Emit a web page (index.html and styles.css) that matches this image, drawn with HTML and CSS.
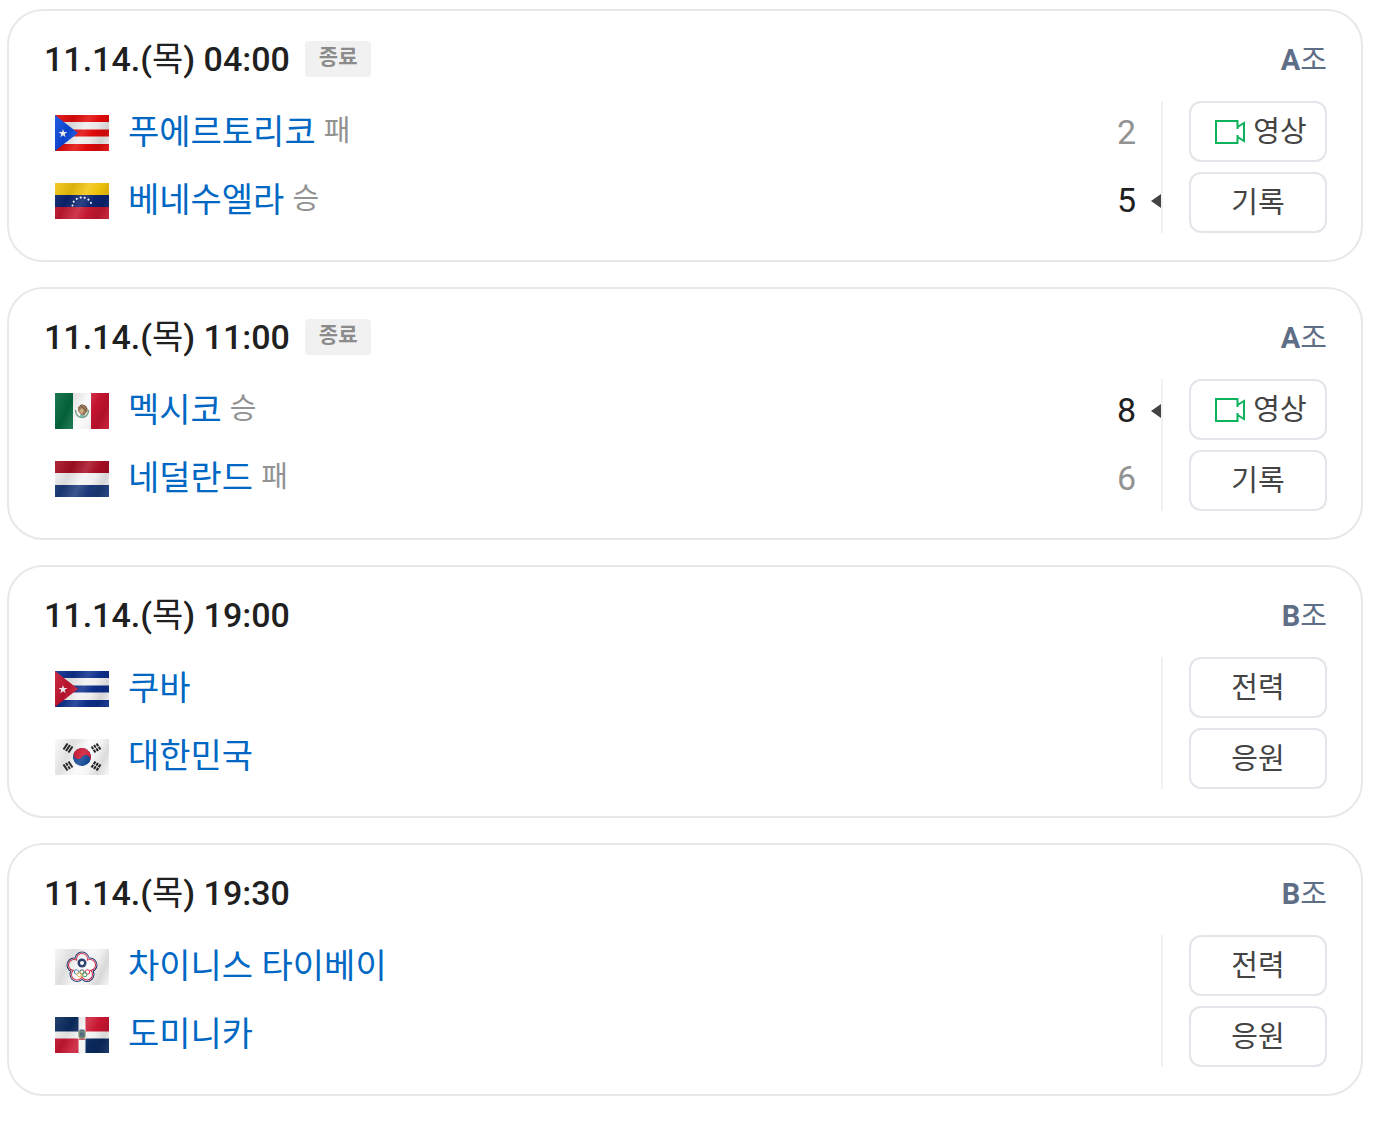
FILE: index.html
```html
<!DOCTYPE html>
<html lang="ko">
<head>
<meta charset="utf-8">
<meta name="viewport" content="width=device-width, initial-scale=1">
<title>11.14.(목)</title>
<link rel="stylesheet" href="styles.css">
</head>
<body>
  <ul class="match-list">
    <li class="match">
      <div class="match-head">
        <strong class="date">11.14.(<span class="ko">목</span>) 04:00</strong>
        <span class="state">종료</span>
        <span class="group">A<span class="ko">조</span></span>
      </div>
      <div class="match-body">
        <div class="teams">
          <div class="team">
            <span class="flag"><svg viewBox="0 0 54 36" aria-hidden="true">
              <path fill="#eee" d="M0 0h54v36H0z"/>
              <path fill="#e30a0a" d="M0 0h54v7H0zM0 14.500h54v7H0zM0 29h54v7H0z"/>
              <path fill="#0b4be0" d="M0 0l23 18L0 36z"/>
              <path fill="#fff" d="M8 14l1 3h3.500l-2.800 2 1 3.200L8 20.300l-2.700 1.900 1-3.200-2.800-2H7z"/>
            </svg></span>
            <a class="name" href="#">푸에르토리코</a>
            <span class="result">패</span>
            <span class="score">2</span>
          </div>
          <div class="team win">
            <span class="flag"><svg viewBox="0 0 54 36" aria-hidden="true">
              <path fill="#f3c50c" d="M0 0h54v12H0z"/>
              <path fill="#0a2472" d="M0 12h54v12H0z"/>
              <path fill="#c61831" d="M0 24h54v12H0z"/>
              <path fill="none" stroke="#fff" stroke-width="2" stroke-linecap="round" stroke-dasharray="0.100 4" d="M17.500 22.500a9.500 8 0 0 1 19 0"/>
            </svg></span>
            <a class="name" href="#">베네수엘라</a>
            <span class="result">승</span>
            <span class="score">5</span>
          </div>
        </div>
        <div class="actions">
          <a class="btn video" href="#"><svg class="ico-video" viewBox="0 0 30 24" aria-hidden="true"><path d="M1 1h21.500v6L29 3v18l-6.500-4v6H1zM22.500 7v2M22.500 17v-2"/></svg>영상</a>
          <a class="btn" href="#">기록</a>
        </div>
      </div>
    </li>

    <li class="match">
      <div class="match-head">
        <strong class="date">11.14.(<span class="ko">목</span>) 11:00</strong>
        <span class="state">종료</span>
        <span class="group">A<span class="ko">조</span></span>
      </div>
      <div class="match-body">
        <div class="teams">
          <div class="team win">
            <span class="flag"><svg viewBox="0 0 54 36" aria-hidden="true">
              <path fill="#fafafa" d="M0 0h54v36H0z"/>
              <path fill="#046a3e" d="M0 0h18v36H0z"/>
              <path fill="#c8142f" d="M36 0h18v36H36z"/>
              <path fill="none" stroke="#6f9a78" stroke-width="1.500" d="M20.500 17c0 10 13 10 13 0"/>
              <path fill="#8d6a48" d="M23 14l4-3 4 2 2 4-2 3-2 3-3-1-3-4z"/>
              <path fill="#c9a06b" d="M24 18l3-3 2 2-2 4z"/>
              <path fill="#67b3ae" d="M25 22h4v2h-4z"/>
              <path stroke="#5b3d27" d="M25 12l6 6M29 12l3 4"/>
            </svg></span>
            <a class="name" href="#">멕시코</a>
            <span class="result">승</span>
            <span class="score">8</span>
          </div>
          <div class="team">
            <span class="flag"><svg viewBox="0 0 54 36" aria-hidden="true">
              <path fill="#a80e24" d="M0 0h54v12H0z"/>
              <path fill="#f4f4f4" d="M0 12h54v12H0z"/>
              <path fill="#1c3b7c" d="M0 24h54v12H0z"/>
            </svg></span>
            <a class="name" href="#">네덜란드</a>
            <span class="result">패</span>
            <span class="score">6</span>
          </div>
        </div>
        <div class="actions">
          <a class="btn video" href="#"><svg class="ico-video" viewBox="0 0 30 24" aria-hidden="true"><path d="M1 1h21.500v6L29 3v18l-6.500-4v6H1zM22.500 7v2M22.500 17v-2"/></svg>영상</a>
          <a class="btn" href="#">기록</a>
        </div>
      </div>
    </li>

    <li class="match">
      <div class="match-head">
        <strong class="date">11.14.(<span class="ko">목</span>) 19:00</strong>
        <span class="group">B<span class="ko">조</span></span>
      </div>
      <div class="match-body">
        <div class="teams">
          <div class="team">
            <span class="flag"><svg viewBox="0 0 54 36" aria-hidden="true">
              <path fill="#f2f2f2" d="M0 0h54v36H0z"/>
              <path fill="#0d2f8c" d="M0 0h54v7H0zM0 14.500h54v7H0zM0 29h54v7H0z"/>
              <path fill="#c81430" d="M0 0l23 18L0 36z"/>
              <path fill="#fff" d="M8 14l1 3h3.500l-2.800 2 1 3.200L8 20.300l-2.700 1.900 1-3.200-2.800-2H7z"/>
            </svg></span>
            <a class="name" href="#">쿠바</a>
          </div>
          <div class="team">
            <span class="flag"><svg viewBox="0 0 54 36" aria-hidden="true">
              <path fill="#fafafa" d="M0 0h54v36H0z"/>
              <g transform="rotate(33 27 18)">
                <circle cx="27" cy="18" r="9" fill="#0d4392"/>
                <path fill="#cf1430" d="M18 18a9 9 0 0 1 18 0a4.500 4.500 0 0 0-9 0a4.500 4.500 0 0 1-9 0z"/>
              </g>
              <g fill="none" stroke="#222" stroke-width="2">
                <path d="M8.500 10.500l4-6M11 12l4-6M13.500 13.500l4-6"/>
                <path stroke-dasharray="3.200 0.800" d="M41.500 4.500l4 6M39 6l4 6M36.500 7.500l4 6"/>
                <path d="M8.500 25.500l4 6M13.500 22.500l4 6"/>
                <path stroke-dasharray="3.200 0.800" d="M11 24l4 6"/>
                <path stroke-dasharray="3.200 0.800" d="M45.500 25.500l-4 6M43 24l-4 6M40.500 22.500l-4 6"/>
              </g>
            </svg></span>
            <a class="name" href="#">대한민국</a>
          </div>
        </div>
        <div class="actions">
          <a class="btn" href="#">전력</a>
          <a class="btn" href="#">응원</a>
        </div>
      </div>
    </li>

    <li class="match">
      <div class="match-head">
        <strong class="date">11.14.(<span class="ko">목</span>) 19:30</strong>
        <span class="group">B<span class="ko">조</span></span>
      </div>
      <div class="match-body">
        <div class="teams">
          <div class="team">
            <span class="flag"><svg viewBox="0 0 54 36" aria-hidden="true">
              <path fill="#f6f6f6" d="M0 0h54v36H0z"/>
              <!-- five petals: blue outside, white, red inside -->
              <g fill="#1d3170"><circle cx="27" cy="10" r="7.500"/><circle cx="35" cy="16" r="7.500"/><circle cx="32" cy="25.500" r="7.500"/><circle cx="22" cy="25.500" r="7.500"/><circle cx="19" cy="16" r="7.500"/></g>
              <g fill="#fff"><circle cx="27" cy="10" r="6.500"/><circle cx="35" cy="16" r="6.500"/><circle cx="32" cy="25.500" r="6.500"/><circle cx="22" cy="25.500" r="6.500"/><circle cx="19" cy="16" r="6.500"/></g>
              <g fill="#d2203c"><circle cx="27" cy="10" r="6"/><circle cx="35" cy="16" r="6"/><circle cx="32" cy="25.500" r="6"/><circle cx="22" cy="25.500" r="6"/><circle cx="19" cy="16" r="6"/></g>
              <g fill="#fff"><circle cx="27" cy="10" r="5"/><circle cx="35" cy="16" r="5"/><circle cx="32" cy="25.500" r="5"/><circle cx="22" cy="25.500" r="5"/><circle cx="19" cy="16" r="5"/><circle cx="27" cy="18" r="8"/></g>
              <circle cx="27" cy="14" r="4.500" fill="#16295f"/>
              <circle cx="27" cy="14" r="2" fill="#fff"/>
              <g fill="none">
                <circle cx="21.500" cy="23" r="2.200" stroke="#2a7fc0"/><circle cx="27" cy="23" r="2.200" stroke="#333"/><circle cx="32.500" cy="23" r="2.200" stroke="#d8304a"/>
                <circle cx="24.300" cy="25.500" r="2.200" stroke="#e5b02a"/><circle cx="29.800" cy="25.500" r="2.200" stroke="#2d9a50"/>
              </g>
            </svg></span>
            <a class="name" href="#">차이니스 타이베이</a>
          </div>
          <div class="team">
            <span class="flag"><svg viewBox="0 0 54 36" aria-hidden="true">
              <path fill="#f6f6f6" d="M0 0h54v36H0z"/>
              <path fill="#0a2b60" d="M0 0h23.500v14.500H0zM30.500 21.500H54V36H30.500z"/>
              <path fill="#cb1732" d="M30.500 0H54v14.500H30.500zM0 21.500h23.500V36H0z"/>
              <path fill="#5f7a5c" d="M23.500 14h7v6l-3.500 3-3.500-3z"/>
              <path fill="#3b5573" d="M25 15.500h4v4h-4z"/>
              <path fill="#c24a50" d="M24 21.500h6v1.500h-6z"/>
              <path fill="#3c5c86" d="M24.500 12.500h5V14h-5z"/>
            </svg></span>
            <a class="name" href="#">도미니카</a>
          </div>
        </div>
        <div class="actions">
          <a class="btn" href="#">전력</a>
          <a class="btn" href="#">응원</a>
        </div>
      </div>
    </li>
  </ul>
</body>
</html>
```

FILE: styles.css
```css
* { box-sizing: border-box; }
body {
  margin: 0; background: #fff; color: #202020;
  font-family: Roboto, "Noto Sans CJK KR", sans-serif;
}
a { text-decoration: none; }

.match-list {
  display: flex; flex-direction: column; gap: 25px;
  margin: 0; padding: 9px 28px 25px 7px; list-style: none;
}
.match {
  padding: 24px 34px 27px 35px;
  border: 2px solid #e8e8e8; border-radius: 36px;
}

.match-head { display: flex; align-items: center; height: 48px; }
.date { font-size: 34px; font-weight: 500; line-height: 50px; }
.ko { font-weight: 400; }
.state {
  margin-left: 15px; padding: 0 13px 4px 14px; border-radius: 4px;
  background: #f1f1f1; color: #8b8b8b;
  font-size: 21px; font-weight: 700; line-height: 32px;
}
.group { margin-left: auto; padding-top: 2px; color: #5f6e87; font-size: 29px; font-weight: 700; line-height: 50px; }

.match-body { display: flex; align-items: stretch; margin-top: 18px; }
.teams { flex: 1; display: flex; flex-direction: column; justify-content: center; margin: -3px 0; }
.team { display: flex; align-items: center; height: 68px; padding-left: 11px; }

.flag { position: relative; width: 54px; height: 36px; margin-right: 19px; }
.flag svg { display: block; width: 100%; height: 100%; }
/* light sheen of a waving cloth */
.flag::after {
  content: ''; position: absolute; inset: 0;
  background: linear-gradient(115deg, rgba(255,255,255,.1), rgba(0,0,0,.1) 28%, rgba(255,255,255,.14) 50%, rgba(0,0,0,.02) 66%, rgba(0,0,0,.12) 82%, rgba(255,255,255,.08));
}
.name { padding-bottom: 2px; color: #0068c3; font-size: 34px; line-height: 50px; }
.result { margin-left: 8px; padding-bottom: 4px; color: #929292; font-size: 29px; line-height: 50px; }
.score { margin-left: auto; padding-right: 25px; padding-bottom: 2px; color: #929292; font-size: 34px; line-height: 50px; }
.win .score { display: flex; align-items: center; gap: 15px; padding-right: 0; color: #202020; }
.win .score::after {
  content: ''; margin-top: 2px; border: solid transparent; border-width: 7px 10px 7px 0;
  border-right-color: #444;
}

.actions {
  display: flex; flex-direction: column; gap: 10px;
  width: 166px; padding-left: 26px; border-left: 2px solid #f1f1f3;
}
.btn {
  display: flex; justify-content: center; align-items: center; height: 61px; padding-bottom: 6px;
  border: 2px solid #e4e4ea; border-radius: 12px;
  color: #444; font-size: 29px;
}
.video { gap: 8px; padding-left: 6px; }
.ico-video { width: 30px; height: 24px; margin-top: 6px; fill: none; stroke: #0cb35c; stroke-width: 2; }
```
